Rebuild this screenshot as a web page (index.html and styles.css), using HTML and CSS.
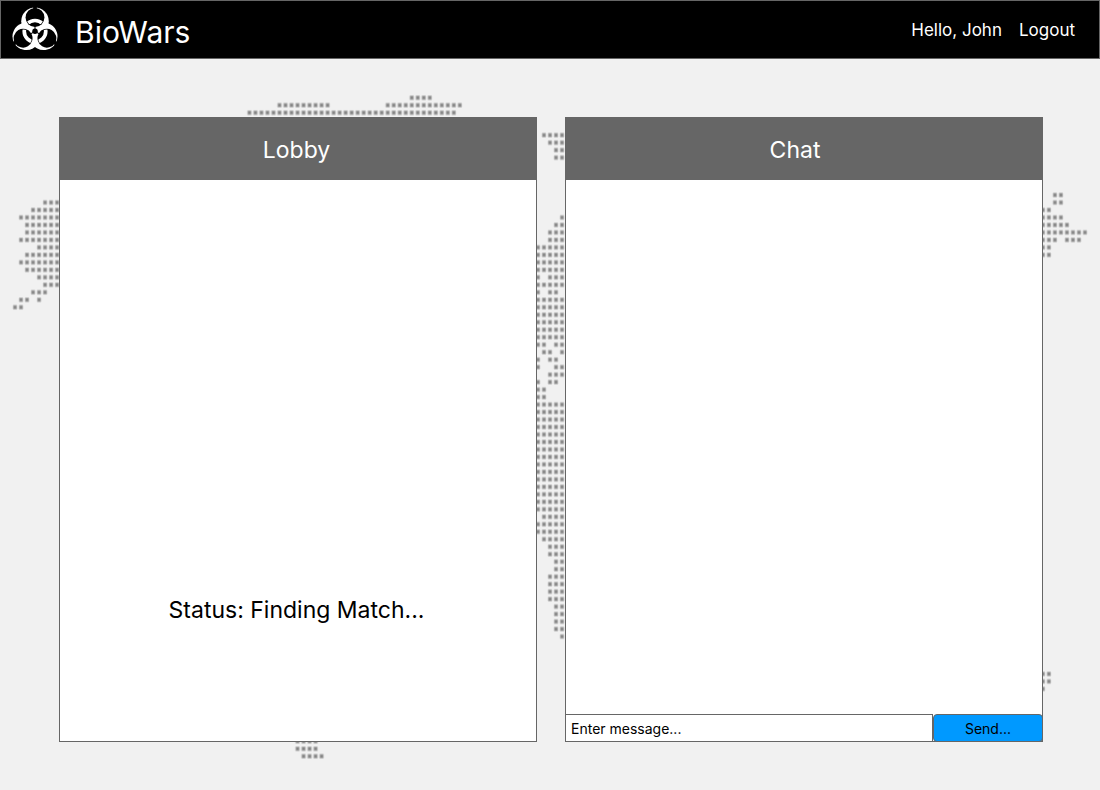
FILE: index.html
```html
<!DOCTYPE html>
<html lang="en">
<head>
<meta charset="utf-8">
<title>BioWars</title>
<link rel="stylesheet" href="styles.css">
</head>
<body>
<svg class="world" viewBox="0 0 180 89" preserveAspectRatio="none" aria-hidden="true">
  <defs>
    <pattern id="dot" width="1" height="1" patternUnits="userSpaceOnUse">
      <rect x=".1" y=".14" width=".8" height=".72" rx=".2" fill="#888" opacity=".3"/>
      <rect x=".2" y=".24" width=".6" height=".52" rx=".12" fill="#888" opacity=".6"/>
      <rect x=".33" y=".35" width=".34" height=".3" fill="#777" opacity=".75"/>
    </pattern>
  </defs>
  <g fill="url(#dot)">
    <!-- northern coast -->
    <path d="M67 0h4v1h-4z M45 1h9v1h-9z M63 1h13v1h-13z M40 2h35v1h-35z"/>
    <!-- west -->
    <path d="M6 14h3v1h-3z M4 15h5v1h-5z M2 16h7v1h-7z M3 17h6v2h-6z M2 19h7v1h-7z M5 20h4v1h-4z M3 21h6v1h-6z M2 22h7v1h-7z M3 23h6v1h-6z M5 24h4v1h-4z M6 25h3v1h-3z M4 26h3v1h-3z M2 27h2v1h-2z M5 27h1v1h-1z M1 28h2v1h-2z"/>
    <!-- centre -->
    <path d="M89 5h4v1h-4z M90 6h3v1h-3z M91 7h2v2h-2z M92 16h1v1h-1z M91 17h2v1h-2z M90 18h3v2h-3z M88 20h5v4h-5z M88 24h1v1h-1z M90 24h3v1h-3z M88 25h5v1h-5z M88 26h1v1h-1z M90 26h2v1h-2z M88 27h5v6h-5z M88 33h2v1h-2z M91 33h2v1h-2z M89 34h2v1h-2z M92 34h1v1h-1z M88 35h1v1h-1z M90 35h2v1h-2z M88 36h1v1h-1z M91 36h2v1h-2z M90 37h3v1h-3z M88 38h1v1h-1z M90 38h2v1h-2z M88 39h2v2h-2z M88 41h5v15h-5z M89 56h4v1h-4z M88 57h5v2h-5z M89 59h4v1h-4z M90 60h3v2h-3z M91 62h2v2h-2z M90 64h3v4h-3z M91 68h2v4h-2z M92 72h1v1h-1z"/>
    <!-- east -->
    <path d="M174 13h2v2h-2z M172 15h2v1h-2z M172 16h4v1h-4z M172 17h5v1h-5z M172 18h8v1h-8z M172 19h3v1h-3z M176 19h3v1h-3z M172 20h2v2h-2z M172 77h2v2h-2z M172 79h1v1h-1z"/>
    <!-- south -->
    <path d="M48 86h4v2h-4z M49 88h4v1h-4z"/>
  </g>
</svg>

<header class="topbar">
  <div class="brand">
    <svg class="logo" viewBox="-25 -26.5 50 48" aria-hidden="true">
      <defs>
        <mask id="crescents" maskUnits="userSpaceOnUse" x="-30" y="-30" width="60" height="60">
          <g fill="#fff">
            <circle cy="-11" r="15"/>
            <circle cy="-11" r="15" transform="rotate(120)"/>
            <circle cy="-11" r="15" transform="rotate(240)"/>
          </g>
          <g id="cuts">
            <circle cy="-15" r="10.3"/>
            <path d="M-2-30h4v10h-4z M-.5-7h1v7h-1z"/>
          </g>
          <use href="#cuts" transform="rotate(120)"/>
          <use href="#cuts" transform="rotate(240)"/>
          <circle r="3"/>
        </mask>
        <clipPath id="openings">
          <circle cy="-15" r="9.5"/>
          <circle cy="-15" r="9.5" transform="rotate(120)"/>
          <circle cy="-15" r="9.5" transform="rotate(240)"/>
        </clipPath>
      </defs>
      <path fill="#fff" mask="url(#crescents)" d="M-30-30h60v60h-60z"/>
      <circle r="11.75" fill="none" stroke="#fff" stroke-width="4" clip-path="url(#openings)"/>
    </svg>
    <span>BioWars</span>
  </div>
  <nav class="account">
    <span>Hello, John</span>
    <a href="#">Logout</a>
  </nav>
</header>

<main class="columns">
  <section class="panel">
    <h1 class="panel-title">Lobby</h1>
    <div class="panel-body lobby-body">
      <p class="status">Status: Finding Match...</p>
    </div>
  </section>
  <section class="panel">
    <h1 class="panel-title chat-title">Chat</h1>
    <div class="panel-body"></div>
    <form class="composer">
      <input class="message" type="text" aria-label="Message" placeholder="Enter message...">
      <button class="send" type="button">Send...</button>
    </form>
  </section>
</main>
</body>
</html>
```
FILE: styles.css
```css
* {
  box-sizing: border-box;
}

body {
  display: flex;
  flex-direction: column;
  min-height: 100vh;
  margin: 0;
  background: #f1f1f1;
  color: #000;
  font-family: Inter, "Liberation Sans", sans-serif;
}

/* Dotted world map behind the page */
.world {
  position: absolute;
  z-index: -1;
  top: 94px;
  left: 6px;
  width: calc(100% - 18px);
  height: 666px;
}

.topbar {
  display: flex;
  align-items: center;
  justify-content: space-between;
  height: 59px;
  padding: 0 24px 0 11px;
  border: 1px solid #666;
  background: #000;
  color: #fff;
}

.brand {
  display: flex;
  align-items: center;
  gap: 17px;
  font-size: 30px;
  line-height: 40px;
}

.brand span {
  padding-top: 5px;
}

.logo {
  width: 46px;
  height: 44px;
  margin-bottom: 2px;
}

.account {
  display: flex;
  gap: 17px;
  padding-top: 1px;
  font-size: 17px;
  line-height: 24px;
}

.account a {
  color: inherit;
  text-decoration: none;
}

.columns {
  display: grid;
  flex: 1;
  grid-template-columns: 1fr 1fr;
  gap: 28px;
  padding: 58px 57px 48px 59px;
}

.panel {
  display: flex;
  flex-direction: column;
  border: 1px solid #666;
  background: #fff;
}

.panel-title {
  margin: 0;
  padding: 16px 3px 14px 0;
  background: #666;
  color: #fff;
  font-size: 23px;
  font-weight: 400;
  line-height: 32px;
  text-align: center;
}

.chat-title {
  padding-right: 18px;
}

.panel-body {
  flex: 1;
}

.lobby-body {
  display: flex;
  align-items: flex-end;
  justify-content: center;
  padding: 0 3px 115px 0;
}

.status {
  margin: 0;
  font-size: 23px;
  line-height: 32px;
}

.composer {
  display: flex;
  height: 28px;
  margin: 0 -1px -1px;
}

.message,
.send {
  border: 1px solid #666;
  color: #000;
  font-family: inherit;
  font-size: 14px;
}

.message {
  flex: 1;
  min-width: 0;
  padding: 0 5px;
  background: #fff;
}

.message::placeholder {
  color: #000;
  opacity: 1;
}

.send {
  width: 110px;
  padding: 0;
  border-radius: 4px;
  background: #09f;
}
```
